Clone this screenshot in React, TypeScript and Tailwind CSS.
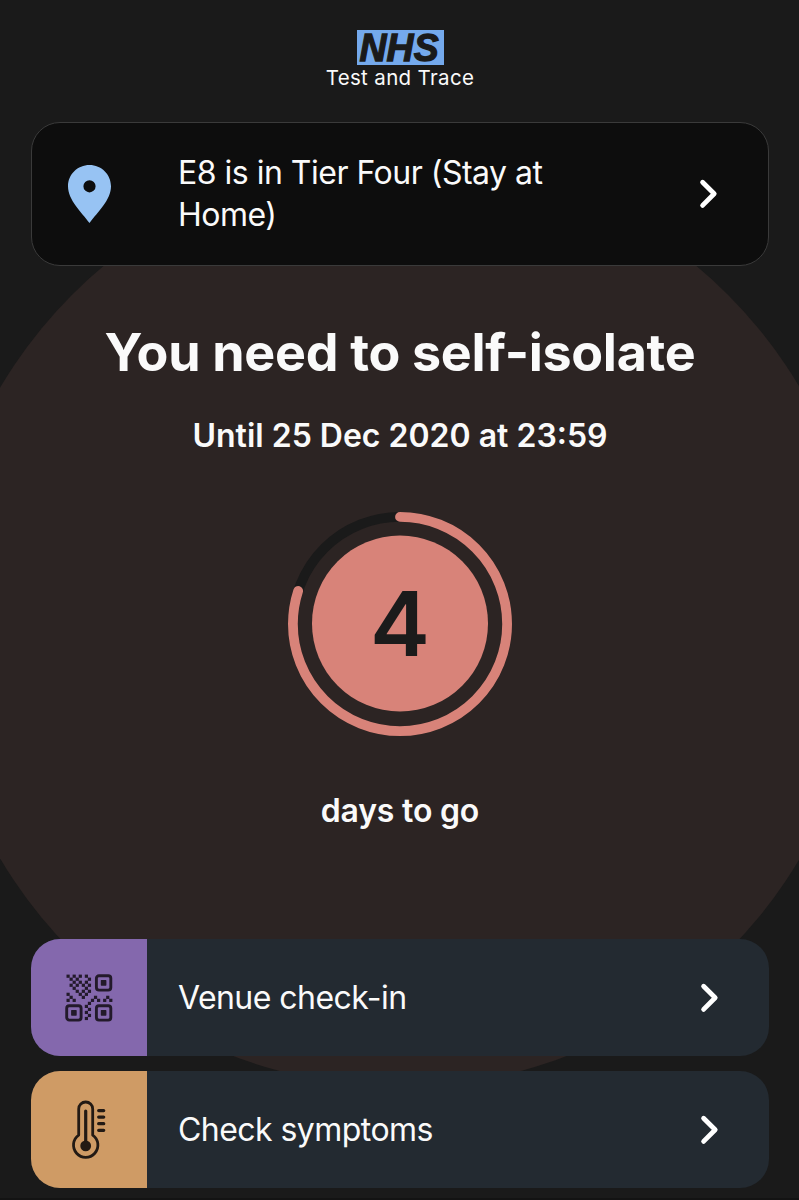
import type { ReactNode } from 'react';

const DAYS_LEFT = 4;

// 1 = filled module on a 3px grid; the finder eyes are drawn separately
const QR_MODULES = [
  '1.1.1.1........',
  '.1.1...1.......',
  '..1.1.1........',
  '.1.1.1.1.......',
  '..1...1........',
  '...1.1.1.......',
  '1...1.1........',
  '.1...1...1...1.',
  '1.1.....1.1.1.1',
  '.......1.......',
  '......1........',
  '.......1.......',
  '......1........',
  '.......1.......',
  '......1........',
];

function ChevronIcon() {
  return (
    <svg className="h-8 w-5 shrink-0" viewBox="0 0 20 32" fill="none" stroke="#fff" strokeWidth="4.8" strokeLinecap="round" strokeLinejoin="round">
      <path d="M3.6 4.2L15.2 15.8L3.6 27.4" />
    </svg>
  );
}

function PinIcon() {
  return (
    <svg className="h-[58px] w-[43px]" viewBox="0 0 43 58" fill="#97c3f3">
      <path
        fillRule="evenodd"
        d="M21.5 0C9.6 0 0 9.4 0 21.2C0 35 13 46.5 21.5 58C30 46.5 43 35 43 21.2C43 9.4 33.4 0 21.5 0ZM21.5 15.2A6.1 6.1 0 1 1 21.5 27.4A6.1 6.1 0 1 1 21.5 15.2Z"
      />
    </svg>
  );
}

function QrEye({ x, y }: { x: number; y: number }) {
  return (
    <>
      <rect x={x + 1.4} y={y + 1.4} width="14.4" height="14.4" rx="2.6" fill="none" stroke="#231a2b" strokeWidth="2.9" />
      <rect x={x + 5.8} y={y + 5.8} width="5.6" height="5.6" rx="0.6" />
    </>
  );
}

function QrIcon() {
  return (
    <svg className="h-12 w-12" viewBox="0 0 48 48" fill="#231a2b">
      {QR_MODULES.map((row, r) =>
        row.split('').map((cell, c) =>
          cell === '1' ? <rect key={`${r}-${c}`} x={c * 3.05 + 1.5} y={r * 3.02 + 0.6} width="3.2" height="3.2" /> : null,
        ),
      )}
      <QrEye x={30} y={0.3} />
      <QrEye x={0.3} y={30.3} />
      <QrEye x={30} y={30.3} />
    </svg>
  );
}

function ThermometerIcon() {
  return (
    <svg className="h-[60px] w-[36px]" viewBox="0 0 36 60" fill="none" stroke="#231a14" strokeLinecap="round">
      <path d="M7.7 35.1V9A7 7 0 0 1 21.7 9V35.1A12.2 12.2 0 1 1 7.7 35.1Z" strokeWidth="2.8" strokeLinejoin="round" />
      <path d="M14.7 11V44.5" strokeWidth="3.2" />
      <circle cx="14.7" cy="45.9" r="5.4" fill="#231a14" stroke="none" />
      <path d="M27.7 10.6H32.7M27.7 17.1H32.7M27.7 23.7H32.7M27.7 30.3H32.7" strokeWidth="3.3" />
    </svg>
  );
}

function Countdown({ days }: { days: number }) {
  return (
    <div className="relative h-[224px] w-[224px]">
      <svg className="h-full w-full" viewBox="0 0 224 224" fill="none" strokeWidth="9.8">
        <circle cx="112" cy="112" r="107.1" stroke="#1a1a1a" />
        <circle
          cx="112"
          cy="112"
          r="107.1"
          stroke="#d88379"
          pathLength="100"
          strokeDasharray="80 100"
          strokeLinecap="round"
          transform="rotate(-90 112 112)"
        />
        <circle cx="112" cy="111.5" r="88" fill="#d88379" />
      </svg>
      <span className="absolute inset-0 flex items-center justify-center text-[90px] leading-none font-semibold text-[#1b1b1b]">
        {days}
      </span>
    </div>
  );
}

function ActionRow({ icon, tint, label }: { icon: ReactNode; tint: string; label: ReactNode }) {
  return (
    <button className="flex h-[117px] w-full items-center overflow-hidden rounded-[29px] bg-[#232a31] text-left">
      <span className={`flex h-full w-[116px] shrink-0 items-center justify-center ${tint}`}>{icon}</span>
      <span className="flex-1 pl-[31px] text-[32px] tracking-[-0.55px]">{label}</span>
      <span className="mr-[49px]">
        <ChevronIcon />
      </span>
    </button>
  );
}

export default function App() {
  return (
    <div className="relative flex h-[1200px] w-[799px] flex-col overflow-hidden bg-[#1a1a1a] pr-[30px] pl-[31px] font-['Inter',sans-serif] text-[#fafafa]">
      {/* Oversized disc behind the isolation status */}
      <div className="absolute top-[159px] left-[-64px] h-[928px] w-[928px] rounded-full bg-[#2c2423]" />

      <header className="relative flex flex-col items-center pt-[30px]">
        <svg className="h-[35px] w-[87px] overflow-visible" viewBox="0 0 87 35">
          <rect width="87" height="35" fill="#74a9ec" />
          <text
            x="2.6"
            y="31.3"
            textLength="79"
            lengthAdjust="spacingAndGlyphs"
            strokeWidth="1.3"
            className="fill-[#1a1a1a] stroke-[#1a1a1a] font-['Liberation_Sans',sans-serif] text-[39.5px] font-bold italic"
          >
            NHS
          </text>
        </svg>
        <div className="text-[20.5px] leading-[26px] tracking-[0.35px]">Test and Trace</div>
      </header>

      <button className="relative mt-[31px] flex h-[144px] shrink-0 items-center rounded-[29px] border border-[#3a3a3a] bg-[#0d0d0d] text-left">
        <span className="flex w-[114px] justify-center">
          <PinIcon />
        </span>
        <span className="w-[420px] pl-[32px] text-[32px] leading-[42.5px] tracking-[-0.5px]">E8 is in Tier Four (Stay at Home)</span>
        <span className="mr-[49px] ml-auto">
          <ChevronIcon />
        </span>
      </button>

      <main className="relative flex flex-col items-center">
        <h1 className="mt-[54px] text-[52px] leading-[66px] font-bold tracking-[-0.3px] whitespace-nowrap">You need to self-isolate</h1>
        <p className="mt-[29px] text-[32px] leading-[42px] font-semibold">Until 25 Dec 2020 at 23:59</p>
        <div className="mt-[55px]">
          <Countdown days={DAYS_LEFT} />
        </div>
        <p className="mt-[54px] text-[32px] leading-[42px] font-semibold tracking-[-0.2px]">days to go</p>
      </main>

      <nav className="relative mt-auto mb-3 flex flex-col gap-[15px]">
        <ActionRow icon={<QrIcon />} tint="bg-[#8468ad]" label="Venue check-in" />
        <ActionRow icon={<ThermometerIcon />} tint="bg-[#cf9b65]" label="Check symptoms" />
      </nav>

      {/* Top edge of the tab bar below the fold */}
      <div className="absolute inset-x-0 bottom-0 h-0.5 bg-[#131313]" />
    </div>
  );
}
